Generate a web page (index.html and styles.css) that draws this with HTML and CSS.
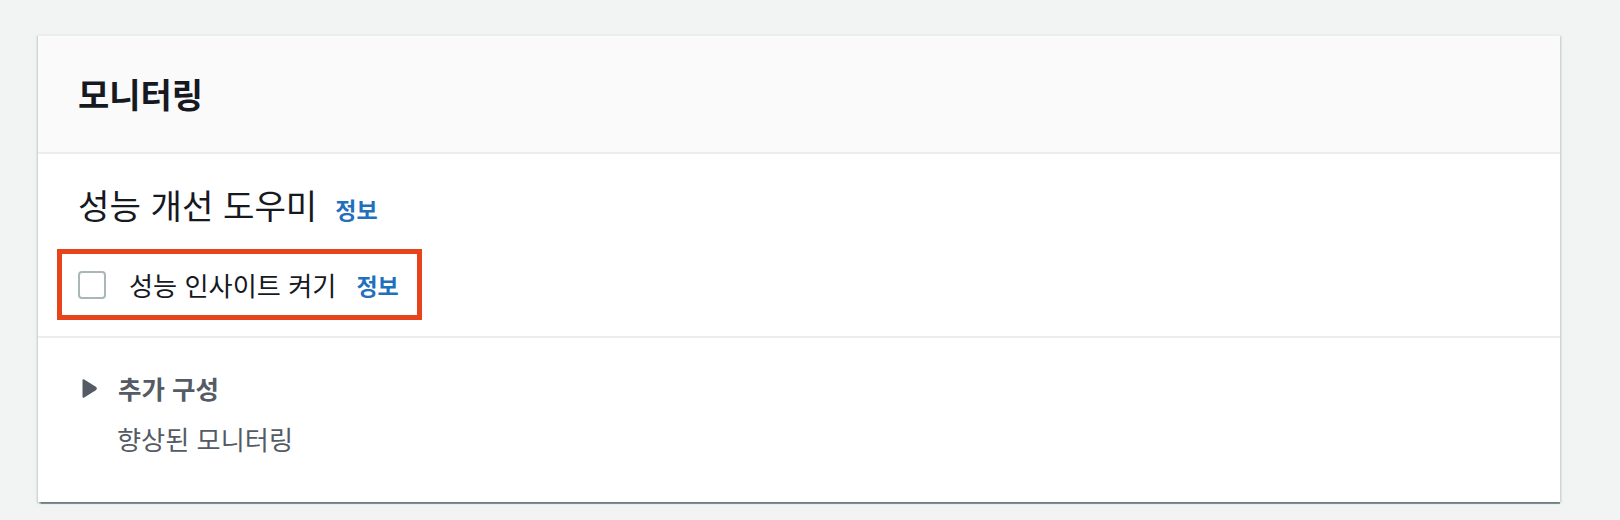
FILE: index.html
```html
<!DOCTYPE html>
<html lang="ko">
<head>
<meta charset="utf-8">
<title>모니터링</title>
<link rel="stylesheet" href="styles.css">
</head>
<body>
  <div class="card">
    <div class="card-header">
      <h2 class="card-title">모니터링</h2>
    </div>
    <div class="section">
      <div class="section-heading">
        <span class="heading-text">성능 개선 도우미</span>
        <a class="info-link" href="#">정보</a>
      </div>
      <div class="highlight">
        <label class="check-row">
          <span class="checkbox"></span>
          <span class="check-label">성능 인사이트 켜기</span>
          <a class="info-link small" href="#">정보</a>
        </label>
      </div>
    </div>
    <div class="section expand">
      <div class="expand-head">
        <svg class="caret" width="17" height="21" viewBox="0 0 17 21"><path d="M1.5 2.5 Q1.5 0.6 3.2 1.6 L15.2 9.1 Q16.6 10.5 15.2 11.9 L3.2 19.4 Q1.5 20.4 1.5 18.5 Z" fill="#545b64"/></svg>
        <span class="expand-title">추가 구성</span>
      </div>
      <div class="expand-sub">향상된 모니터링</div>
    </div>
  </div>
</body>
</html>
```
FILE: styles.css
```css
* { box-sizing: border-box; }
html, body { margin: 0; padding: 0; }
body {
  background: #f2f3f3;
  font-family: "Noto Sans CJK KR", "Noto Sans", sans-serif;
  color: #16191f;
  padding: 35px 0 0 38px;
  height: 520px;
}
.card {
  width: 1522px;
  background: #ffffff;
  box-shadow: 0 2px 1px -0.5px rgba(0, 28, 36, 0.4), 1px 1px 2px 0 rgba(0, 28, 36, 0.18), -1px 1px 2px 0 rgba(0, 28, 36, 0.18);
  border-top: 1px solid #eaeded;
}
.card-header {
  background: #fafafa;
  height: 118px;
  display: flex;
  align-items: center;
  padding: 0 40px;
  border-bottom: 2px solid #eaeded;
}
.card-title {
  margin: 0;
  font-size: 34px;
  font-weight: 700;
  line-height: 40px;
  color: #16191f;
}
.section {
  padding: 30px 40px 16px 40px;
  border-bottom: 2px solid #eaeded;
}
.section-heading {
  display: flex;
  align-items: baseline;
  gap: 18px;
  line-height: 40px;
}
.heading-text {
  font-size: 34.2px;
  font-weight: 400;
}
.info-link {
  color: #1f70bd;
  font-size: 23px;
  font-weight: 700;
  text-decoration: none;
}
.highlight {
  display: inline-flex;
  margin-top: 20px;
  margin-left: -21px;
  border: 5px solid #e8441c;
  padding: 0 18px 0 16px;
  height: 71px;
  align-items: center;
}
.check-row {
  display: flex;
  align-items: center;
}
.checkbox {
  width: 28px;
  height: 28px;
  border: 2px solid #aab7b8;
  border-radius: 4px;
  background: #fff;
  margin-right: 23px;
}
.check-label {
  font-size: 26.2px;
  line-height: 32px;
  margin-right: 20px;
}
.info-link.small { font-size: 23px; line-height: 32px; }
.expand {
  border-bottom: none;
  padding: 34px 40px 47px 40px;
}
.expand-head {
  display: flex;
  align-items: center;
  height: 32px;
}
.caret {
  margin-left: 3px;
  margin-right: 20px;
}
.expand-title {
  font-size: 25.5px;
  font-weight: 700;
  color: #545b64;
  line-height: 32px;
}
.expand-sub {
  margin-top: 19px;
  padding-left: 39px;
  font-size: 26.2px;
  line-height: 32px;
  color: #545b64;
}
```
